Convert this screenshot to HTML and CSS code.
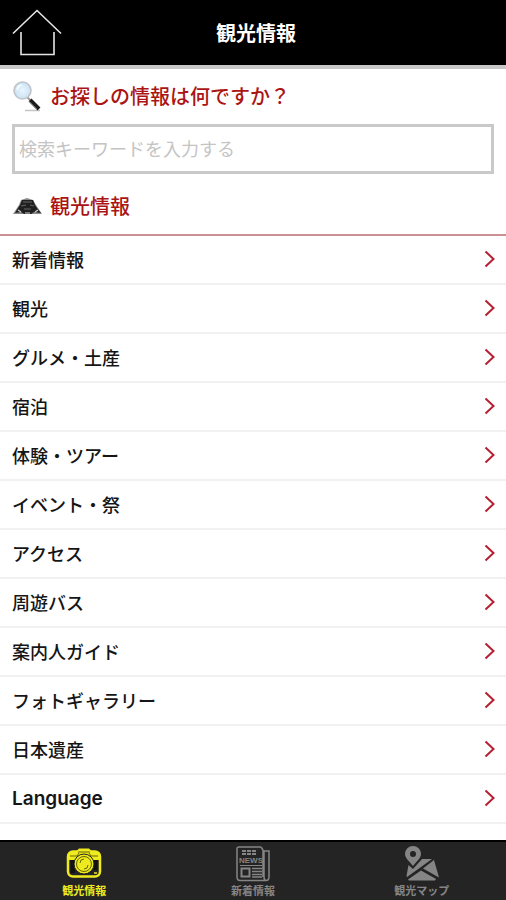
FILE: index.html
```html
<!DOCTYPE html>
<html lang="ja">
<head>
<meta charset="utf-8">
<meta name="viewport" content="width=device-width, initial-scale=1">
<title>観光情報</title>
<link rel="stylesheet" href="styles.css">
</head>
<body>
<svg class="defs" width="0" height="0" aria-hidden="true">
  <symbol id="chevron" viewBox="0 0 12 18"><path d="M1.500 1.500 9.500 9 1.500 16.500" fill="none" stroke="currentColor" stroke-width="2"/></symbol>
</svg>
<header class="topbar">
  <a class="home" href="#" aria-label="ホーム">
    <svg width="50" height="48" viewBox="0 0 50 48" fill="none" stroke="#e6e6e6" stroke-width="1.6"><path d="M1 24.500 25 1.500 49 24.500"/><path d="M9 23V45.500H42V23"/></svg>
  </a>
  <h1>観光情報</h1>
</header>
<main>
  <form class="search">
    <label class="heading" for="keyword">
      <svg width="30" height="32" viewBox="0 0 30 32">
        <defs><radialGradient id="lens"><stop offset="0" stop-color="#e9f6ff"/><stop offset="1" stop-color="#c9e2f4"/></radialGradient></defs>
        <path d="M13 30.500H28" stroke="#c4c4c4" stroke-width="1.500"/>
        <path d="M15 17 19 21" stroke="#999" stroke-width="2"/>
        <path d="M18 20 27 29" stroke="#1c1c1c" stroke-width="4"/>
        <path d="M17 21 25 29" stroke="#666" stroke-width="1"/>
        <circle cx="10.500" cy="10.500" r="8.500" fill="url(#lens)" stroke="#c0c4c8" stroke-width="1.600"/>
        <path d="M5 10a6 6 0 0 1 5-5" fill="none" stroke="#fff" stroke-width="1.500"/>
      </svg>
      <span>お探しの情報は何ですか？</span>
    </label>
    <input id="keyword" type="text" placeholder="検索キーワードを入力する">
  </form>
  <h2 class="heading section">
    <svg width="30" height="18" viewBox="0 0 30 18">
      <path d="M1 17 5 11 7 8 9 3 12 2 15 1 21 3 24 8 26 11 30 17Z" fill="#8b8b8b"/>
      <path d="M3 16 6 11 8 8 10 3 21 3 23 8 25 11 29 16 22 15 19 17H12L9 15Z" fill="#202020"/>
      <path d="M11 5H20M9 9 14 8M18 8 22 9M12 12H19" stroke="#666" stroke-width="1" fill="none"/>
      <path d="M6 13 9 15M23 15 26 13M13 16H18" stroke="#d0d0d0" stroke-width="1.200"/>
    </svg>
    <span>観光情報</span>
  </h2>
  <ul class="menu">
    <li><a href="#">新着情報<svg><use href="#chevron"/></svg></a></li>
    <li><a href="#">観光<svg><use href="#chevron"/></svg></a></li>
    <li><a href="#">グルメ・土産<svg><use href="#chevron"/></svg></a></li>
    <li><a href="#">宿泊<svg><use href="#chevron"/></svg></a></li>
    <li><a href="#">体験・ツアー<svg><use href="#chevron"/></svg></a></li>
    <li><a href="#">イベント・祭<svg><use href="#chevron"/></svg></a></li>
    <li><a href="#">アクセス<svg><use href="#chevron"/></svg></a></li>
    <li><a href="#">周遊バス<svg><use href="#chevron"/></svg></a></li>
    <li><a href="#">案内人ガイド<svg><use href="#chevron"/></svg></a></li>
    <li><a href="#">フォトギャラリー<svg><use href="#chevron"/></svg></a></li>
    <li><a href="#">日本遺産<svg><use href="#chevron"/></svg></a></li>
    <li><a href="#" class="latin">Language<svg><use href="#chevron"/></svg></a></li>
  </ul>
</main>
<nav class="tabs">
  <a href="#" class="active" aria-current="page">
    <svg width="36" height="36" viewBox="0 0 36 36" fill="none" stroke="currentColor">
      <path d="M5 5.500H10L13 2.500H23L26 5.500H31L34 9V14H2V9Z" fill="currentColor" stroke="none"/>
      <rect x="2" y="5.500" width="32" height="25" rx="5" stroke-width="2.500"/>
      <path d="M4.500 14H9V27H4.500ZM27 14H31.500V24H27Z" fill="#111" stroke="none"/>
      <path d="M12 6H24M4 10H11L13 7M32 10H25L23 7" stroke="#666600" stroke-width="1"/>
      <circle cx="18" cy="18" r="10" fill="currentColor" stroke="#222"/>
      <circle cx="18" cy="18" r="7.500" stroke="#666600"/>
      <path d="M14 17a4 4 0 0 1 4-4M22 19a4 4 0 0 1-4 4" stroke="#666600"/>
      <path d="M28 27H31" stroke-width="1.500"/>
    </svg>
    <span>観光情報</span>
  </a>
  <a href="#">
    <svg width="36" height="36" viewBox="0 0 36 36" fill="none" stroke="currentColor" stroke-width="1.500">
      <path d="M26 1H4Q2 1 2 3V31Q2 34.500 5 34.500H31Q34 34.500 34 31V5H29V31Q29 34.500 31 34.500M26 1 28 4V31"/>
      <path d="M7 5H21M7 8H21" stroke-width="2" stroke-dasharray="4 1"/>
      <text class="news" x="4" y="17" fill="currentColor" stroke="none">NEWS</text>
      <path d="M5 19.500H27" stroke-width="1"/>
      <rect x="6.500" y="22.500" width="8" height="8" stroke-width="2"/>
      <path d="M17 22.500H27M17 25.500H27M17 28.500H27M17 31H27"/>
    </svg>
    <span>新着情報</span>
  </a>
  <a href="#">
    <svg width="36" height="36" viewBox="0 0 36 36" fill="currentColor">
      <path fill-rule="evenodd" d="M9 0a8 8 0 0 1 8 8c0 4-4 7-8 12C5 15 1 12 1 8a8 8 0 0 1 8-8ZM9 5a3 3 0 1 0 0 6 3 3 0 0 0 0-6Z"/>
      <path d="M18 13H28L17 21 3 31 2.500 30 4.500 19 9 23Z"/>
      <path d="M30 14 35 31.500 19 22.500ZM17 24.500 32 33 31 34.500H5L4 33.500Z"/>
    </svg>
    <span>観光マップ</span>
  </a>
</nav>
</body>
</html>
```
FILE: styles.css
```css
* {
  box-sizing: border-box;
}

body {
  display: flex;
  flex-direction: column;
  min-height: 100vh;
  margin: 0;
  background: #fff;
  color: #151515;
  font-family: "Noto Sans CJK JP", sans-serif;
  font-size: 18px;
  font-weight: 500;
}

a {
  color: inherit;
  text-decoration: none;
}

.defs {
  position: absolute;
}

.topbar {
  display: grid;
  grid-template-columns: 1fr auto 1fr;
  align-items: center;
  height: 69px;
  padding: 0 6px 0 12px;
  border-bottom: 4px solid #c8c8c8;
  background: #000;
  color: #fff;
}

.home svg {
  display: block;
}

.topbar h1 {
  margin: 0;
  font-size: 20px;
  line-height: 32px;
  font-weight: 700;
}

main {
  flex: 1;
}

.search {
  padding: 11px 12px 0;
}

.heading {
  display: flex;
  align-items: center;
  gap: 8px;
  color: #ab1414;
  font-size: 20px;
  line-height: 32px;
  font-weight: 500;
}

.search input {
  display: block;
  width: 100%;
  height: 50px;
  margin-top: 12px;
  padding: 0 4px 2px;
  border: 3px solid #c9c9c9;
  border-radius: 0;
  background: #fff;
  color: inherit;
  font: inherit;
  font-weight: 400;
}

.search input::placeholder {
  color: #c4c4c4;
  opacity: 1;
}

.section {
  margin: 0;
  padding: 16px 12px 12px;
  border-bottom: 2px solid #cf9095;
}

.menu {
  margin: 0;
  padding: 0;
  list-style: none;
}

.menu a {
  display: flex;
  align-items: center;
  justify-content: space-between;
  height: 49px;
  padding: 0 10px 1px 12px;
  border-bottom: 2px solid #f1f1f1;
}

.menu svg {
  width: 12px;
  height: 18px;
  color: #b51f32;
}

.menu .latin {
  font-family: Inter, "Noto Sans CJK JP", sans-serif;
  font-size: 19px;
  font-weight: 600;
}

.tabs {
  display: grid;
  grid-template-columns: repeat(3, 1fr);
  height: 60px;
  border-top: 2px solid #000;
  background: #242424;
  color: #858585;
}

.tabs a {
  display: flex;
  flex-direction: column;
  align-items: center;
  padding-top: 4px;
  font-size: 11px;
  line-height: 16px;
  font-weight: 700;
}

.tabs .active {
  color: #eeea20;
}

.news {
  font-family: "Liberation Sans", sans-serif;
  font-size: 8px;
  font-weight: 700;
}
```
